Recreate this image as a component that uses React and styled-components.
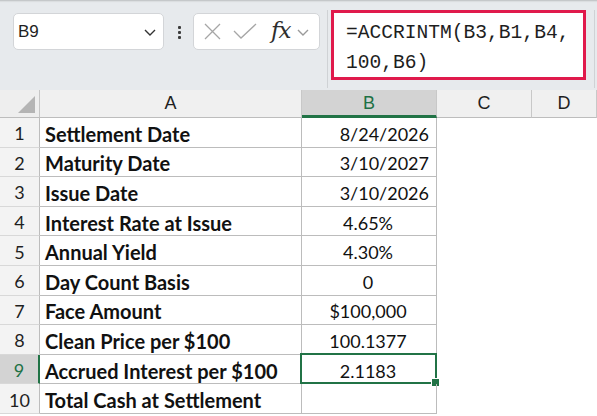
import { createGlobalStyle } from "styled-components";
import styled from "styled-components";

const GlobalStyle = createGlobalStyle`
  html, body {
    margin: 0;
    padding: 0;
    background: #ffffff;
  }
  body {
    width: 597px;
    height: 416px;
    overflow: hidden;
    font-family: "Lato", "Liberation Sans", sans-serif;
  }
`;

const Toolbar = styled.div`
  display: flex;
  align-items: flex-start;
  height: 90px;
  background: #e7eaed;
  box-shadow: inset 0 3px 2px -2px rgba(0, 0, 0, 0.2);
  box-sizing: border-box;
`;

const Box = styled.div`
  display: flex;
  align-items: center;
  box-sizing: border-box;
  height: 37px;
  margin-top: 13px;
  background: #ffffff;
  border: 1px solid #d3d5d8;
  border-radius: 5px;
`;

const NameBox = styled(Box)`
  width: 151px;
  margin-left: 13px;
  padding: 0 6px 0 4px;
  justify-content: space-between;
  font-family: "Liberation Sans", sans-serif;
  font-size: 17px;
  color: #1f1f1f;
`;

const Dots = styled.div`
  display: flex;
  flex-direction: column;
  gap: 2px;
  margin: 26px 12px 0 14px;
  span {
    width: 3px;
    height: 3px;
    background: #3c3c3c;
    border-radius: 1px;
  }
`;

const FuncBox = styled(Box)`
  width: 127px;
  padding: 0 4px 0 10px;
  gap: 12px;
`;

const Fx = styled.span`
  font-family: "DejaVu Serif", "Liberation Serif", serif;
  font-style: italic;
  font-size: 23px;
  color: #2e2e2e;
  margin: -3px -6px 0 2px;
  letter-spacing: -1px;
`;

const FormulaWrap = styled.div`
  flex: 1;
  display: flex;
  box-sizing: border-box;
  height: 78px;
  margin: 10px 2px 0 7px;
  padding-left: 3px;
  border-left: 1px solid #cfd2d5;
  border-right: 1px solid #cfd2d5;
`;

const FormulaBox = styled.div`
  box-sizing: border-box;
  width: 255px;
  height: 70px;
  padding: 5px 0 0 12px;
  background: #ffffff;
  border: 3px solid #e01a4c;
  font-family: "Liberation Mono", "DejaVu Sans Mono", monospace;
  font-size: 19.6px;
  line-height: 30px;
  color: #1e1e1e;
  white-space: pre;
`;

const Sheet = styled.div`
  display: grid;
  grid-template-columns: 40px 262px 135px 95px 1fr;
  grid-template-rows: 28px repeat(10, 29.6px);
  background: #ffffff;
`;

const Corner = styled.div`
  position: relative;
  background: #eeeeee;
  border-right: 1px solid #c6c6c6;
  border-bottom: 1px solid #bdbdbd;
  &::after {
    content: "";
    position: absolute;
    right: 4px;
    bottom: 4px;
    border-style: solid;
    border-width: 0 0 17px 17px;
    border-color: transparent transparent #b4b4b4 transparent;
  }
`;

const ColHead = styled.div`
  display: flex;
  align-items: center;
  justify-content: center;
  box-sizing: border-box;
  background: ${({ $active }) => ($active ? "#d3d3d3" : "#f0f0f0")};
  color: ${({ $active }) => ($active ? "#1e7145" : "#1f1f1f")};
  border-right: 1px solid #c8c8c8;
  border-bottom: ${({ $active }) =>
    $active ? "3px solid #217346" : "1px solid #bdbdbd"};
  padding-top: ${({ $active }) => ($active ? "2px" : "0")};
  font-family: "Liberation Sans", sans-serif;
  font-size: 18px;
`;

const RowHead = styled.div`
  display: flex;
  align-items: center;
  justify-content: center;
  box-sizing: border-box;
  padding-top: 2px;
  background: ${({ $active }) => ($active ? "#d3d3d3" : "#f3f3f3")};
  color: ${({ $active }) => ($active ? "#1e7145" : "#1f1f1f")};
  border-right: ${({ $active }) =>
    $active ? "2px solid #217346" : "1px solid #bdbdbd"};
  border-bottom: 1px solid #d8d8d8;
  font-size: 18px;
`;

const Cell = styled.div`
  position: relative;
  display: flex;
  align-items: center;
  justify-content: ${({ $align }) => $align || "flex-start"};
  box-sizing: border-box;
  padding: 3px 7px 0 5px;
  border-right: 1px solid #bcbcbc;
  border-bottom: 1px solid #bcbcbc;
  font-size: ${({ $bold }) => ($bold ? "20px" : "18px")};
  font-weight: ${({ $bold }) => ($bold ? 700 : 400)};
  color: #111111;
  white-space: nowrap;
`;

const Selection = styled.div`
  position: absolute;
  left: -2px;
  top: -2px;
  right: -1px;
  bottom: -1px;
  border: 2px solid #217346;
  pointer-events: none;
  &::after {
    content: "";
    position: absolute;
    right: -5px;
    bottom: -5px;
    width: 7px;
    height: 7px;
    background: #217346;
    border: 1px solid #ffffff;
  }
`;

const Blank = styled.div``;

const rows = [
  ["Settlement Date", "8/24/2026", "flex-end"],
  ["Maturity Date", "3/10/2027", "flex-end"],
  ["Issue Date", "3/10/2026", "flex-end"],
  ["Interest Rate at Issue", "4.65%", "center"],
  ["Annual Yield", "4.30%", "center"],
  ["Day Count Basis", "0", "center"],
  ["Face Amount", "$100,000", "center"],
  ["Clean Price per $100", "100.1377", "center"],
  ["Accrued Interest per $100", "2.1183", "center"],
  ["Total Cash at Settlement", "", "center"],
];

const Chevron = ({ color = "#333", size = 14 }) => (
  <svg width={size} height={size} viewBox="0 0 14 14">
    <path d="M2 5l5 5 5-5" fill="none" stroke={color} strokeWidth="1.4" />
  </svg>
);

export default function App() {
  return (
    <>
      <GlobalStyle />
      <Toolbar>
        <NameBox>
          <span>B9</span>
          <Chevron />
        </NameBox>
        <Dots>
          <span />
          <span />
          <span />
        </Dots>
        <FuncBox>
          <svg width="17" height="17" viewBox="0 0 17 17">
            <path d="M1 1l15 15M16 1L1 16" stroke="#a6a6a6" strokeWidth="1.3" />
          </svg>
          <svg width="24" height="17" viewBox="0 0 24 17">
            <path d="M1 8l7 7L23 1" fill="none" stroke="#a6a6a6" strokeWidth="1.3" />
          </svg>
          <Fx>fx</Fx>
          <Chevron color="#9a9a9a" />
        </FuncBox>
        <FormulaWrap>
          <FormulaBox>{"=ACCRINTM(B3,B1,B4,\n100,B6)"}</FormulaBox>
        </FormulaWrap>
      </Toolbar>
      <Sheet>
        <Corner />
        <ColHead>A</ColHead>
        <ColHead $active>B</ColHead>
        <ColHead>C</ColHead>
        <ColHead>D</ColHead>
        {rows.map(([label, value, align], i) => (
          <Row
            key={label}
            n={i + 1}
            label={label}
            value={value}
            align={align}
            active={i === 8}
          />
        ))}
      </Sheet>
    </>
  );
}

function Row({ n, label, value, align, active }) {
  return (
    <>
      <RowHead $active={active}>{n}</RowHead>
      <Cell $bold>{label}</Cell>
      <Cell $align={align}>
        {value}
        {active && <Selection />}
      </Cell>
      <Blank />
      <Blank />
    </>
  );
}
